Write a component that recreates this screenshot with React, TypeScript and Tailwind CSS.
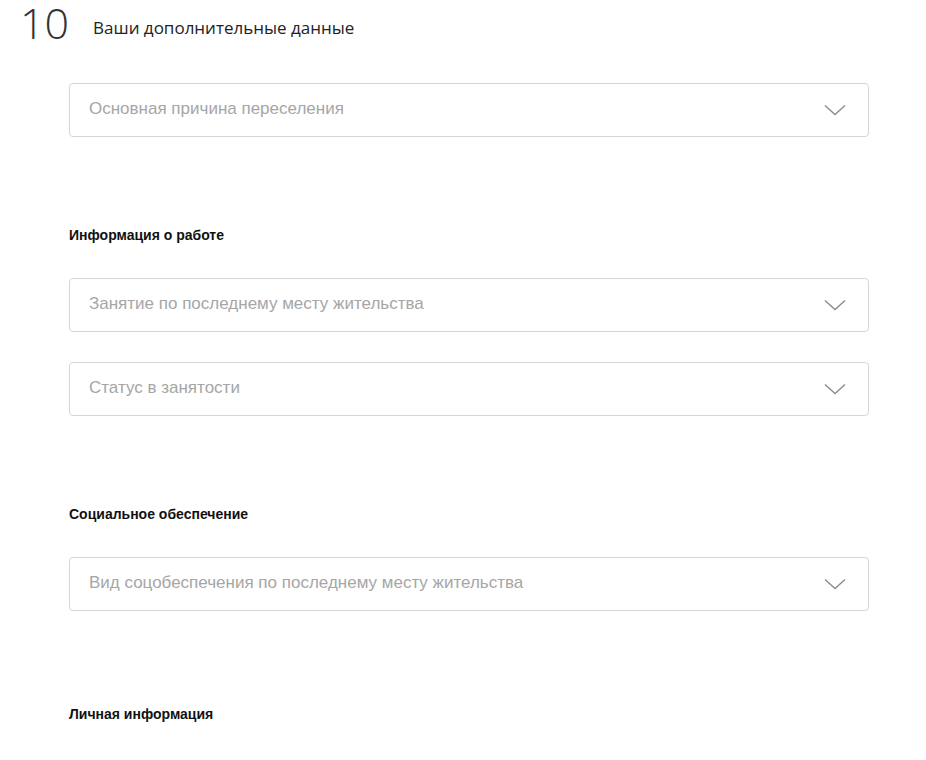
import { ReactNode } from 'react';

function Chevron() {
  return (
    <svg width="22" height="12" viewBox="0 0 22 12" fill="none" className="shrink-0">
      <path d="M1 1.5L11 10.5L21 1.5" stroke="#8c8c8c" strokeWidth="1.4" />
    </svg>
  );
}

function SelectField({ placeholder }: { placeholder: string }) {
  return (
    <div className="flex h-[54px] w-[800px] items-center justify-between rounded-[4px] border border-[#d6d6d6] bg-white pl-[19px] pr-[22px]">
      <span className="pb-[3px] text-[17px] text-[#a6a6a6] [font-family:'Liberation_Sans',Arial,sans-serif]">
        {placeholder}
      </span>
      <Chevron />
    </div>
  );
}

function SectionTitle({ children }: { children: ReactNode }) {
  return (
    <h3 className="text-[14px] leading-[16px] font-bold text-[#111] [font-family:'Liberation_Sans',Arial,sans-serif]">
      {children}
    </h3>
  );
}

export default function App() {
  return (
    <div className="min-h-[760px] w-[926px] bg-white">
      {/* Step header */}
      <div className="flex h-[46px] items-center pl-[20px]">
        <span className="text-[43px] leading-[46px] font-extralight text-[#333] [font-family:'Open_Sans',sans-serif]">
          10
        </span>
        <span className="ml-[24px] pt-[10px] text-[17px] text-[#222] [font-family:'Open_Sans',sans-serif]">
          Ваши дополнительные данные
        </span>
      </div>

      <div className="ml-[69px] flex flex-col pt-[37px]">
        <SelectField placeholder="Основная причина переселения" />

        <div className="mt-[90px]">
          <SectionTitle>Информация о работе</SectionTitle>
        </div>
        <div className="mt-[35px] flex flex-col gap-[30px]">
          <SelectField placeholder="Занятие по последнему месту жительства" />
          <SelectField placeholder="Статус в занятости" />
        </div>

        <div className="mt-[90px]">
          <SectionTitle>Социальное обеспечение</SectionTitle>
        </div>
        <div className="mt-[35px]">
          <SelectField placeholder="Вид соцобеспечения по последнему месту жительства" />
        </div>

        <div className="mt-[95px]">
          <SectionTitle>Личная информация</SectionTitle>
        </div>
      </div>
    </div>
  );
}
